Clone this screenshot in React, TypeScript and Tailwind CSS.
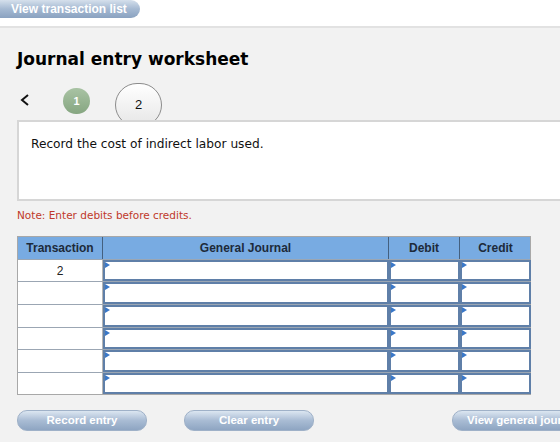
import React from "react";

const rows = ["2", "", "", "", "", ""];

function Marker() {
  return (
    <svg className="absolute left-0 top-0" width="5" height="6" viewBox="0 0 5 6">
      <path d="M0 0 L5 3 L0 6 Z" fill="#3a78c8" />
    </svg>
  );
}

function InputCell() {
  return (
    <div className="relative h-full border-2 border-[#5f7fa8] bg-white">
      <Marker />
    </div>
  );
}

function PillButton({ label, className }: { label: string; className: string }) {
  return (
    <div
      className={`flex h-[21px] shrink-0 items-center justify-center whitespace-nowrap rounded-[10px] border border-[#9fb1c8] bg-gradient-to-b from-[#dce6f1] via-[#a9bcd4] to-[#8ea5c2] text-[11.5px] font-bold text-white ${className}`}
      style={{ fontFamily: '"Liberation Sans", Arial, sans-serif' }}
    >
      {label}
    </div>
  );
}

export default function App() {
  return (
    <div className="h-[442px] w-[560px] overflow-hidden bg-[#f2f2f2]" style={{ fontFamily: '"DejaVu Sans", Verdana, sans-serif' }}>
      <div className="h-[28px] border-b-2 border-[#e2e2e2] bg-white">
        <div
          className="flex h-[18px] w-[140px] items-center rounded-r-[10px] bg-gradient-to-b from-[#d5e0ec] via-[#a5b9d2] to-[#8aa2c0] pl-[11px] text-[12px] font-bold text-white"
          style={{ fontFamily: '"Liberation Sans", Arial, sans-serif' }}
        >
          View transaction list
        </div>
      </div>

      <div className="px-[17px]">
        <h1 className="pt-[20px] text-[17px] font-bold leading-[22px] text-black">Journal entry worksheet</h1>

        <div className="mt-[13px] flex h-[37px] items-start">
          <svg className="ml-[3px] mt-[11px]" width="10" height="12" viewBox="0 0 10 12">
            <path d="M8 1 L2 6 L8 11" fill="none" stroke="#111" strokeWidth="2" />
          </svg>
          <div
            className="ml-[33px] mt-[5px] flex h-[26px] w-[27px] items-center justify-center rounded-full bg-gradient-to-b from-[#a9c3a4] to-[#86a681] text-[11px] font-bold text-white"
            style={{ fontFamily: '"Liberation Sans", Arial, sans-serif' }}
          >
            1
          </div>
          <div
            className="ml-[25px] flex h-[44px] w-[47px] shrink-0 items-start justify-center rounded-full border border-[#8c8c8c] bg-gradient-to-b from-white to-[#e6e6e6] pt-[11px] text-[13px] text-[#111]"
            style={{ fontFamily: '"Liberation Sans", Arial, sans-serif' }}
          >
            2
          </div>
        </div>

        <div className="relative z-10 -mr-[17px] h-[81px] border-2 border-r-0 border-[#d6d6d6] bg-white pl-[12px] pt-[13px] text-[12.2px] text-[#111]">
          Record the cost of indirect labor used.
        </div>

        <p className="mt-[7px] text-[10.5px] text-[#c0392b]">Note: Enter debits before credits.</p>

        <div
          className="mt-[12px] w-[514px] border border-[#a8a8a8]"
          style={{ fontFamily: '"Liberation Sans", Arial, sans-serif' }}
        >
          <div className="grid h-[22px] grid-cols-[85px_286px_71px_71px] bg-[#78abe2] text-[12px] font-bold text-[#1d2a3a]">
            <div className="flex items-center justify-center border-r border-[#44607f]">Transaction</div>
            <div className="flex items-center justify-center border-r border-[#44607f]">General Journal</div>
            <div className="flex items-center justify-center border-r border-[#44607f]">Debit</div>
            <div className="flex items-center justify-center">Credit</div>
          </div>
          {rows.map((t, i) => (
            <div key={i} className="grid h-[22.6px] grid-cols-[85px_286px_71px_71px] border-t border-[#9ba6b3]">
              <div className="flex items-center justify-center border-r border-[#b5b5b5] bg-white text-[12px] text-[#222]">
                {t}
              </div>
              <InputCell />
              <InputCell />
              <InputCell />
            </div>
          ))}
        </div>

        <div className="mt-[15px] flex">
          <PillButton label="Record entry" className="w-[130px]" />
          <PillButton label="Clear entry" className="ml-[37px] w-[130px]" />
          <PillButton label="View general journal" className="ml-[138px] w-[150px] justify-start pl-[14px]" />
        </div>
      </div>
    </div>
  );
}
